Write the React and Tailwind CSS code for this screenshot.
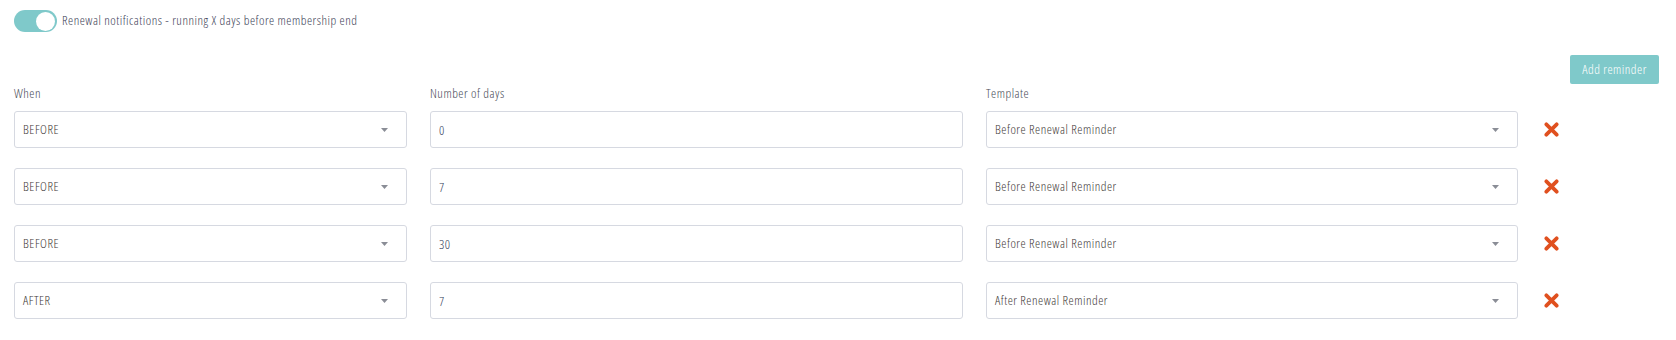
import React, { useState } from 'react';

const font = { fontFamily: '"Open Sans", "DejaVu Sans Condensed", sans-serif', fontStretch: '75%', fontWeight: 350, letterSpacing: '0.5px' };

const reminders = [
    { when: 'BEFORE', days: '0', template: 'Before Renewal Reminder' },
    { when: 'BEFORE', days: '7', template: 'Before Renewal Reminder' },
    { when: 'BEFORE', days: '30', template: 'Before Renewal Reminder' },
    { when: 'AFTER', days: '7', template: 'After Renewal Reminder' },
];

const Caret = () => (
    <svg className="w-[7px] h-[4px]" viewBox="0 0 7 4" aria-hidden="true">
        <path d="M0 0h7L3.5 4z" fill="#8a8d96" />
    </svg>
);

const RemoveIcon = () => (
    <svg className="w-[15px] h-[15px]" viewBox="0 0 16 16" aria-hidden="true">
        <path d="M2.5 2.5l11 11M13.5 2.5l-11 11" stroke="#e0501f" strokeWidth="4" strokeLinecap="round" />
    </svg>
);

const FakeSelect = ({ value }) => (
    <div className="h-[37px] flex items-center justify-between border border-[#d6d9e1] rounded-[3px] pl-[8px] pr-[18px] bg-white">
        <span className="text-[13px] text-[#3f3a38]">{value}</span>
        <Caret />
    </div>
);

const App = () => {
    const [enabled, setEnabled] = useState(true);

    return (
        <div className="w-[1676px] h-[340px] bg-white pl-[14px] pr-[17px] pt-[10px]" style={font}>
            <div className="flex items-center gap-[5px]">
                <button
                    type="button"
                    onClick={() => setEnabled(!enabled)}
                    className="w-[43px] h-[22px] rounded-full bg-[#7fc9ca] flex items-center justify-end pr-[2px]"
                >
                    <span className="w-[19px] h-[19px] rounded-full bg-white block" />
                </button>
                <span className="text-[13px] text-[#3c4156]">Renewal notifications - running X days before membership end</span>
            </div>

            <div className="flex justify-end mt-[23px]">
                <button type="button" className="w-[89px] h-[29px] rounded-[2px] bg-[#7fc9ca] text-white text-[13px]" style={font}>
                    Add reminder
                </button>
            </div>

            <div className="grid grid-cols-[393px_533px_532px_auto] gap-x-[23px] -mt-[1px]">
                <div className="text-[13px] text-[#474a56] h-[20px] leading-[20px]">When</div>
                <div className="text-[13px] text-[#474a56] h-[20px] leading-[20px]">Number of days</div>
                <div className="text-[13px] text-[#474a56] h-[20px] leading-[20px]">Template</div>
                <div />

                {reminders.map((r, i) => (
                    <React.Fragment key={i}>
                        <div className={i === 0 ? 'mt-[8px] mb-[14px]' : 'mt-[6px] mb-[14px]'}><FakeSelect value={r.when} /></div>
                        <div className={i === 0 ? 'mt-[8px] mb-[14px]' : 'mt-[6px] mb-[14px]'}>
                            <input
                                defaultValue={r.days}
                                className="w-full h-[37px] border border-[#d6d9e1] rounded-[3px] px-[8px] text-[13px] text-[#34405a] outline-none"
                                style={font}
                            />
                        </div>
                        <div className={i === 0 ? 'mt-[8px] mb-[14px]' : 'mt-[6px] mb-[14px]'}><FakeSelect value={r.template} /></div>
                        <div className={i === 0 ? 'mt-[8px] mb-[14px] flex items-center pl-[3px]' : 'mt-[6px] mb-[14px] flex items-center pl-[3px]'}>
                            <button type="button"><RemoveIcon /></button>
                        </div>
                    </React.Fragment>
                ))}
            </div>
        </div>
    );
};

export default App;
